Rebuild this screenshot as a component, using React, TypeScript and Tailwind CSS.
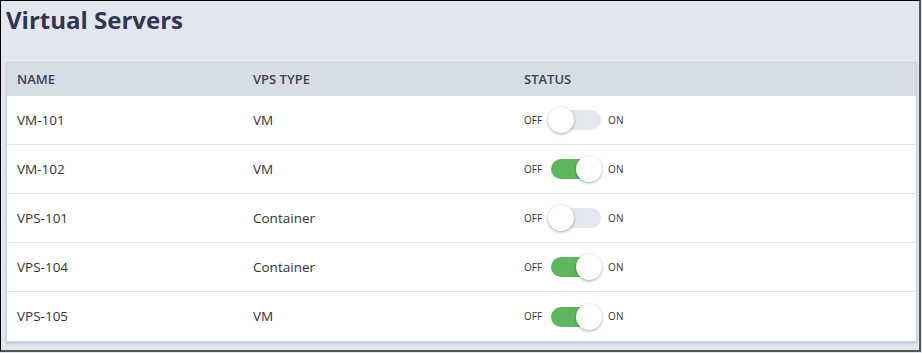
import React, { useState } from 'react';

interface Server {
  name: string;
  type: string;
  on: boolean;
}

const servers: Server[] = [
  { name: 'VM-101', type: 'VM', on: false },
  { name: 'VM-102', type: 'VM', on: true },
  { name: 'VPS-101', type: 'Container', on: false },
  { name: 'VPS-104', type: 'Container', on: true },
  { name: 'VPS-105', type: 'VM', on: true },
];

const Toggle: React.FC<{ on: boolean; onChange: () => void }> = ({ on, onChange }) => (
  <div className="flex items-center text-[10px] text-[#333]">
    <span className="mr-[9px]">OFF</span>
    <button
      onClick={onChange}
      className={`relative h-[20px] w-[50px] rounded-full ${on ? 'bg-[#5cb85c]' : 'bg-[#e4e7ed]'}`}
    >
      <span
        className={`absolute top-[-3px] h-[26px] w-[26px] rounded-full bg-white shadow-[0_1px_3px_rgba(0,0,0,0.35)] ${on ? 'left-[25px]' : 'left-[-3px]'}`}
      />
    </button>
    <span className="ml-[7px]">ON</span>
  </div>
);

const App: React.FC = () => {
  const [rows, setRows] = useState(servers);

  const toggle = (i: number) =>
    setRows(rows.map((r, idx) => (idx === i ? { ...r, on: !r.on } : r)));

  return (
    <div className="h-[353px] w-[922px] bg-[#e3e6ee] pr-px pb-px">
      <div
        className="h-full border-t border-l border-black border-r-2 border-b-2 border-r-[#555] border-b-[#555] pl-[5px] pr-[2px]"
        style={{ fontFamily: '"Open Sans", sans-serif' }}
      >
        <h1 className="pt-[4px] text-[24px] font-bold leading-[30px] text-[#2f3552]">
          Virtual Servers
        </h1>
        <div className="mt-[27px] border border-[#c8d1dc] bg-white shadow-[0_2px_2px_rgba(0,0,0,0.12)]">
          <div className="flex h-[33px] items-center bg-[#d6dde5] text-[13px] font-semibold text-[#3b4050]">
            <div className="w-[246px] pl-[10px]">NAME</div>
            <div className="w-[271px]">VPS TYPE</div>
            <div>STATUS</div>
          </div>
          {rows.map((s, i) => (
            <div
              key={s.name}
              className={`flex h-[49px] items-center text-[13.5px] text-[#333] ${i < rows.length - 1 ? 'border-b border-[#dfe3e9]' : ''}`}
            >
              <div className="w-[246px] pl-[10px]">{s.name}</div>
              <div className="w-[271px]">{s.type}</div>
              <Toggle on={s.on} onChange={() => toggle(i)} />
            </div>
          ))}
        </div>
      </div>
    </div>
  );
};

export default App;
